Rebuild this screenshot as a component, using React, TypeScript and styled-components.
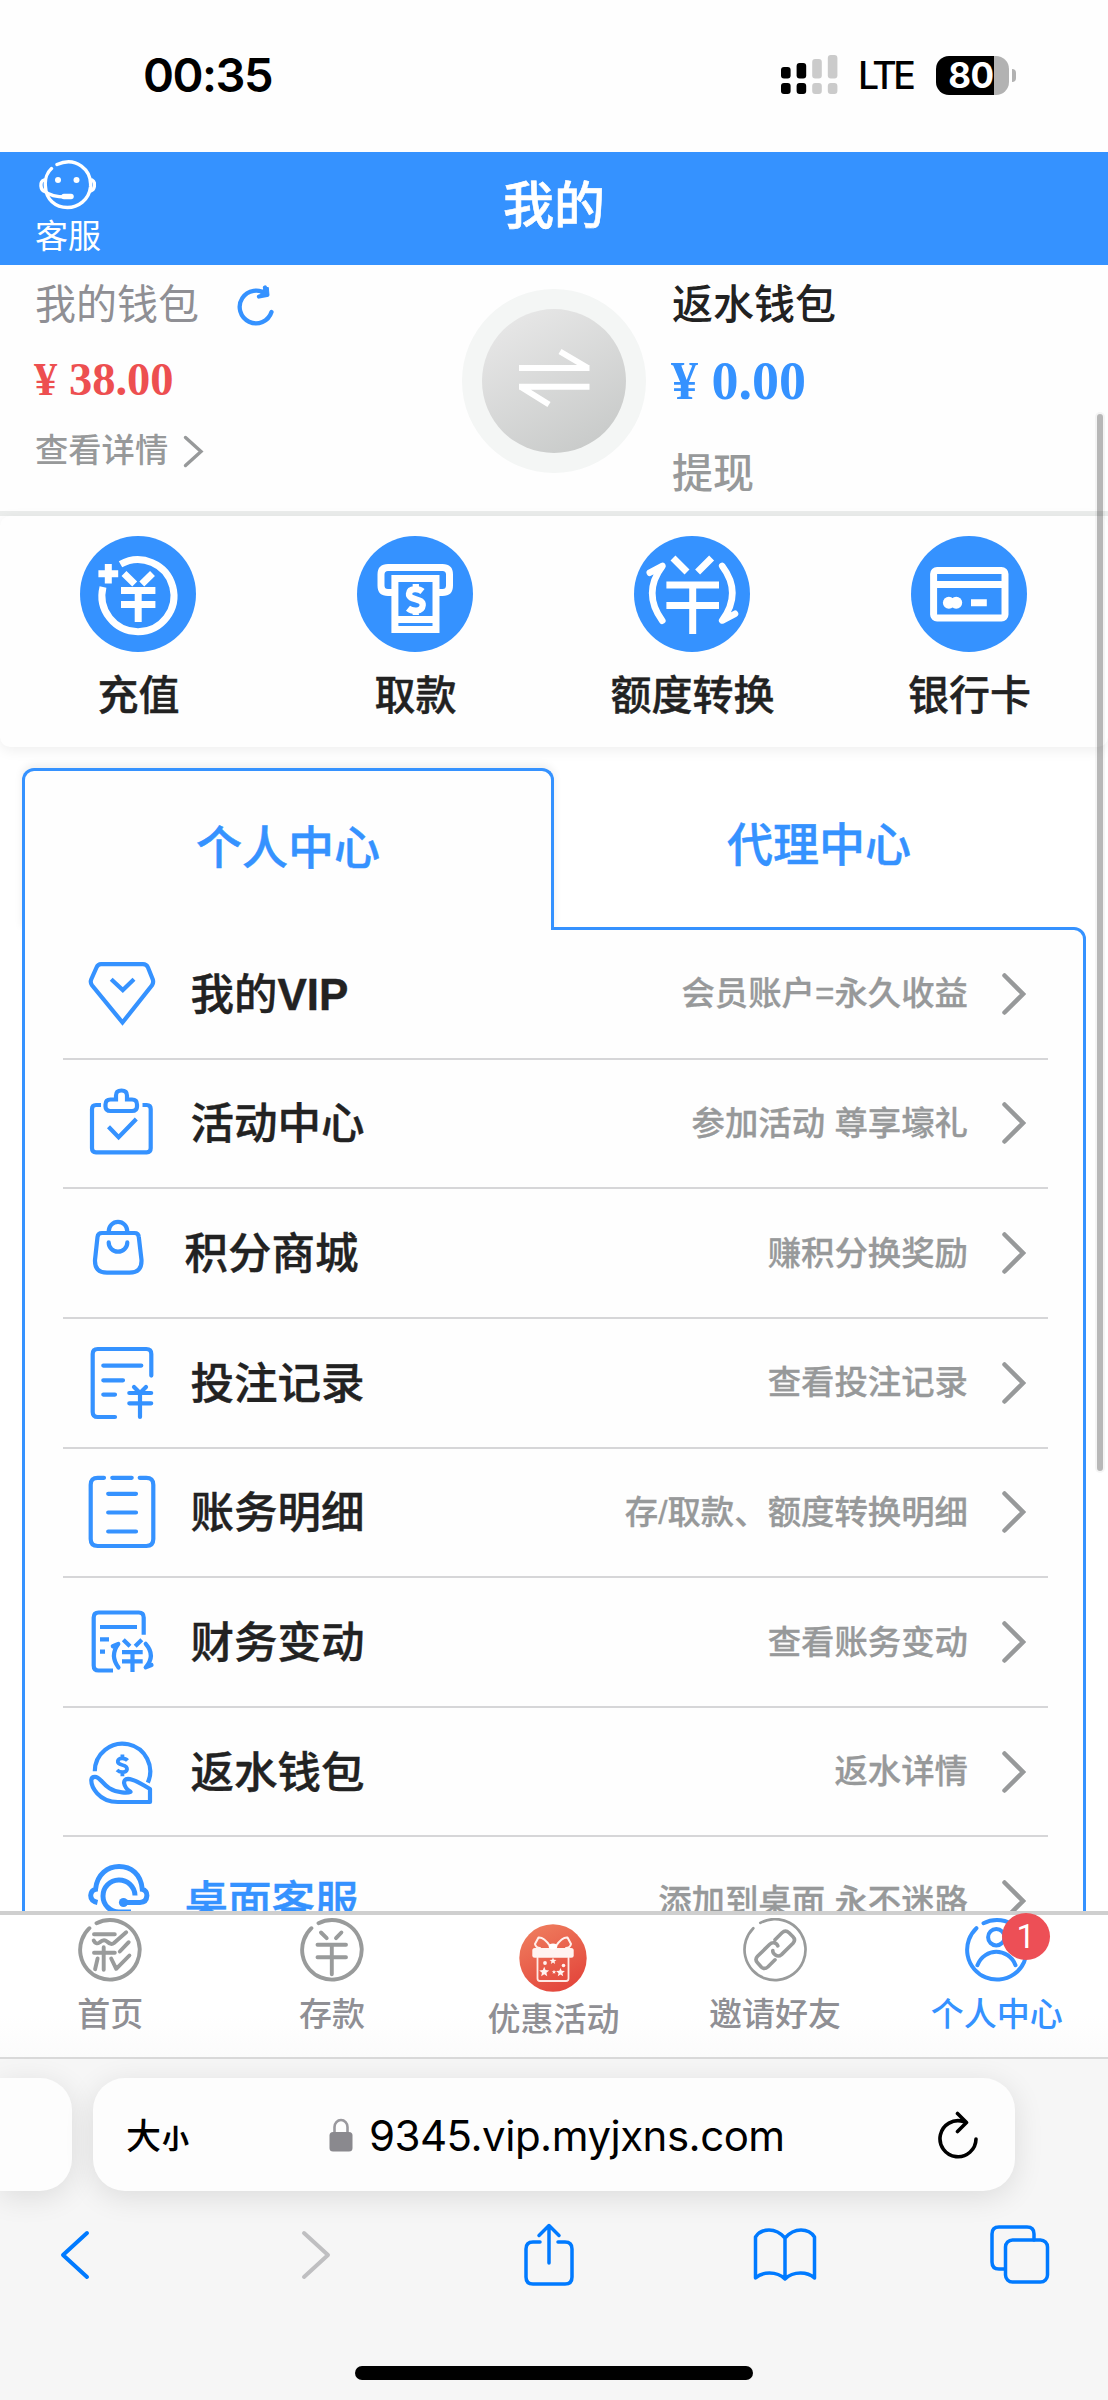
import React from 'react';
import styled, { createGlobalStyle } from 'styled-components';

const BLUE = '#3592ff';
const GREY = '#97999a';
const INK = '#222222';
const SANS = '"Liberation Sans", "Noto Sans CJK SC", sans-serif';
const SYSTEM = 'Inter, "Noto Sans CJK SC", sans-serif';

const GlobalStyle = createGlobalStyle`
  * { box-sizing: border-box; }
  body { margin: 0; background: #fff; }
`;

const Screen = styled.div`
  position: relative;
  display: flex;
  flex-direction: column;
  width: 1108px;
  height: 2400px;
  overflow: hidden;
  background: #fff;
  font-family: ${SANS};
  color: ${INK};
`;

/* ---------- status bar ---------- */

const StatusBar = styled.div`
  flex: none;
  display: flex;
  align-items: center;
  justify-content: space-between;
  height: 152px;
  padding: 0 92px 2px 143px;
  background: #fefefe;
  font-family: ${SYSTEM};
  color: #000;
`;

const Clock = styled.span`
  font-size: 47px;
  line-height: 56px;
  font-weight: 600;
  letter-spacing: -1.5px;
`;

const StatusRight = styled.div`
  display: flex;
  align-items: center;
`;

const Carrier = styled.span`
  width: 60px;
  margin: 2px 18px 0 20px;
  font-size: 37.5px;
  line-height: 44px;
  font-weight: 500;
  letter-spacing: -3.5px;
`;

const Battery = styled.div`
  display: flex;
  align-items: center;
  justify-content: center;
  width: 73px;
  height: 39px;
  padding-right: 3px;
  border-radius: 13px;
  background: linear-gradient(90deg, #000 58px, #b2b2b2 58px);
  color: #fff;
  font-size: 35px;
  line-height: 39px;
  font-weight: 700;
  letter-spacing: -0.5px;
`;

const BatteryNub = styled.div`
  width: 4px;
  height: 13px;
  margin-left: 3px;
  border-radius: 0 4px 4px 0;
  background: #b2b2b2;
`;

/* ---------- page header ---------- */

const Header = styled.header`
  flex: none;
  display: grid;
  grid-template-columns: 1fr auto 1fr;
  height: 113px;
  padding: 0 35px;
  background: ${BLUE};
  color: #fff;
`;

const Support = styled.div`
  display: flex;
  flex-direction: column;
  width: 68px;
  padding-top: 8px;
  font-size: 33px;
  line-height: 40px;
  svg { margin: 0 0 7px 3px; }
`;

const Title = styled.h1`
  margin: 0;
  font-size: 51px;
  line-height: 110px;
  font-weight: 500;
  -webkit-text-stroke: 0.6px currentColor;
`;

/* ---------- scrolling page ---------- */

const Page = styled.main`
  flex: none;
  height: 1646px;
  overflow: hidden;
`;

const Wallets = styled.section`
  display: flex;
  height: 251px;
  border-bottom: 5px solid #ebedec;
  background: #fefefe;
`;

const Wallet = styled.div<{ $left?: boolean }>`
  display: flex;
  flex-direction: column;
  width: ${(p) => (p.$left ? 462 : 430)}px;
  padding: 19px 0 0 ${(p) => (p.$left ? 35 : 26)}px;
`;

const WalletName = styled.div<{ $strong?: boolean }>`
  display: flex;
  align-items: center;
  gap: 38px;
  height: 42px;
  font-size: 41px;
  line-height: 42px;
  font-weight: ${(p) => (p.$strong ? 500 : 400)};
  color: ${(p) => (p.$strong ? INK : '#8f8f94')};
  svg { margin-top: 2px; }
`;

const Amount = styled.div<{ $color: string; $size: number }>`
  height: 56px;
  margin: 26px 0 0 -1px;
  font-family: "Liberation Serif", serif;
  font-weight: 700;
  font-size: ${(p) => p.$size}px;
  line-height: ${(p) => (p.$size > 50 ? 58 : 55)}px;
  color: ${(p) => p.$color};
`;

const WalletLink = styled.div<{ $big?: boolean }>`
  display: flex;
  align-items: center;
  gap: 15px;
  height: 42px;
  margin-top: ${(p) => (p.$big ? 45 : 22)}px;
  font-size: ${(p) => (p.$big ? 41 : 33.3)}px;
  line-height: 42px;
  font-weight: 500;
  color: ${GREY};
`;

const Transfer = styled.div`
  flex: none;
  display: flex;
  align-items: center;
  justify-content: center;
  width: 184px;
  height: 184px;
  margin-top: 23.5px;
  border-radius: 50%;
  background: #f4f6f5;
`;

const TransferDisc = styled.div`
  display: flex;
  align-items: center;
  justify-content: center;
  width: 144px;
  height: 144px;
  border-radius: 50%;
  background: linear-gradient(150deg, #e6e6e6 12%, #c9cbca 88%);
`;

const QuickActions = styled.nav`
  display: grid;
  grid-template-columns: repeat(4, 1fr);
  height: 231px;
  border-radius: 10px;
  background: #fefefe;
  box-shadow: 0 3px 14px rgba(0, 0, 0, 0.07);
`;

const QuickAction = styled.div`
  display: flex;
  flex-direction: column;
  align-items: center;
  padding-top: 20px;
  font-size: 41px;
  line-height: 48px;
  font-weight: 500;
  -webkit-text-stroke: 0.4px currentColor;
  svg { margin: 0 1px 20px 0; border-radius: 50%; background: ${BLUE}; }
`;

const Center = styled.section`
  margin: 21px 22px 0;
`;

const Tabs = styled.div`
  display: flex;
  height: 159px;
`;

const Tab = styled.div<{ $active?: boolean }>`
  width: ${(p) => (p.$active ? 532 : 530)}px;
  height: ${(p) => (p.$active ? 162 : 150)}px;
  border: 3px solid ${(p) => (p.$active ? BLUE : 'transparent')};
  border-bottom: 0;
  border-radius: 12px 12px 0 0;
  background: ${(p) => (p.$active ? '#fefefe' : 'transparent')};
  position: relative;
  z-index: ${(p) => (p.$active ? 1 : 0)};
  box-shadow: ${(p) => (p.$active ? '0 -3px 8px rgba(0,0,0,.07)' : 'none')};
  clip-path: inset(-12px -12px 0 -12px);
  text-align: center;
  font-size: 46px;
  line-height: ${(p) => (p.$active ? 155 : 149)}px;
  font-weight: 500;
  -webkit-text-stroke: 0.5px currentColor;
  color: ${BLUE};
`;

const Panel = styled.div`
  height: 1060px;
  padding: 0 35px 0 38px;
  border: 3px solid ${BLUE};
  border-radius: 0 12px 0 0;
  background: #fefefe;
`;

const MenuRow = styled.div`
  display: flex;
  align-items: center;
  height: 129.65px;
  padding: 0 22px 0 23px;
  border-bottom: 2px solid #d6d6d8;
`;

const MenuIcon = styled.svg<{ $tight?: boolean }>`
  flex: none;
  width: 72px;
  height: 72px;
  margin-right: ${(p) => (p.$tight ? 26.5 : 32.5)}px;
  overflow: visible;
  fill: none;
  stroke: ${BLUE};
  stroke-width: 4.2;
`;

const MenuLabel = styled.span<{ $accent?: boolean }>`
  flex: 1;
  padding-top: 2px;
  font-size: 43.5px;
  line-height: 60px;
  font-weight: 500;
  -webkit-text-stroke: 0.4px currentColor;
  color: ${(p) => (p.$accent ? BLUE : INK)};
  b { font-weight: 700; font-size: 44px; }
`;

const MenuHint = styled.span`
  margin-right: 34px;
  padding-top: 1px;
  font-size: 33.4px;
  line-height: 50px;
  font-weight: 500;
  -webkit-text-stroke: 0.3px currentColor;
  color: ${GREY};
`;

const ScrollThumb = styled.div`
  position: absolute;
  z-index: 2;
  top: 414px;
  left: 1097px;
  width: 6px;
  height: 1057px;
  border-radius: 3px;
  background: rgba(0, 0, 0, 0.28);
  box-shadow: 0 0 0 2px rgba(0, 0, 0, 0.04);
`;

/* ---------- site tab bar ---------- */

const TabBar = styled.nav`
  flex: none;
  display: grid;
  grid-template-columns: repeat(5, 1fr);
  height: 148px;
  border-top: 4px solid #cfcfcf;
  border-bottom: 2px solid #d9d9d9;
  background: linear-gradient(#fff 70%, #fbfbfb);
`;

const TabItem = styled.div<{ $active?: boolean; $drop?: boolean }>`
  display: flex;
  flex-direction: column;
  align-items: center;
  padding-top: ${(p) => (p.$drop ? 9 : 2.5)}px;
  font-size: 33px;
  line-height: 40px;
  font-weight: 500;
  color: ${(p) => (p.$active ? BLUE : '#8f8f94')};
  span { margin-top: ${(p) => (p.$drop ? 8 : 13)}px; margin-right: 1px; }
`;

const TabIcon = styled.div`
  position: relative;
  display: flex;
  margin-right: 1px;
  svg { fill: none; stroke-linecap: round; stroke-linejoin: round; }
`;

const Badge = styled.div`
  position: absolute;
  top: -5px;
  left: 37px;
  width: 48px;
  height: 47px;
  border-radius: 50%;
  background: #ed4f56;
  color: #fff;
  font-family: Roboto, sans-serif;
  font-weight: 400;
  font-size: 33px;
  line-height: 47px;
  text-align: center;
`;

/* ---------- browser chrome ---------- */

const Browser = styled.footer`
  flex: none;
  display: flex;
  flex-direction: column;
  align-items: center;
  height: 341px;
  background: #f6f6f6;
  font-family: ${SYSTEM};
  color: #000;
`;

const AddressRow = styled.div`
  display: flex;
  width: 100%;
  gap: 21px;
  padding-top: 19px;
`;

const PreviousTab = styled.div`
  width: 72px;
  height: 113px;
  border-radius: 0 32px 32px 0;
  background: #fdfdfd;
  box-shadow: 0 6px 30px rgba(0, 0, 0, 0.11);
`;

const Address = styled.div`
  display: flex;
  align-items: center;
  width: 922px;
  height: 113px;
  padding: 0 37px 0 33px;
  border-radius: 32px;
  background: #fdfdfd;
  box-shadow: 0 6px 30px rgba(0, 0, 0, 0.11);
`;

const TextSize = styled.span`
  width: 203px;
  padding-top: 2px;
  font-family: "Noto Sans CJK SC", sans-serif;
  font-size: 35px;
  line-height: 50px;
  font-weight: 500;
  small { margin-left: 1px; font-size: 27px; font-weight: 700; }
`;

const Url = styled.span`
  flex: 1;
  margin-left: 16px;
  padding-top: 2px;
  font-size: 42px;
  line-height: 54px;
  letter-spacing: -0.5px;
  white-space: nowrap;
`;

const Toolbar = styled.div`
  display: flex;
  align-items: center;
  justify-content: space-between;
  width: 100%;
  height: 66px;
  margin-top: 31px;
  padding: 0 56px 0 46px;
  svg { fill: none; stroke: #007aff; stroke-width: 3.5; stroke-linecap: round; stroke-linejoin: round; }
`;

const ToolButton = styled.div<{ $shift?: number; $disabled?: boolean }>`
  display: flex;
  justify-content: center;
  width: 64px;
  ${(p) => p.$shift && `padding-${p.$shift < 0 ? 'right' : 'left'}: ${Math.abs(p.$shift)}px;`}
  && svg { ${(p) => p.$disabled && 'stroke: #bfbfc1;'} }
`;

const HomeIndicator = styled.div`
  width: 398px;
  height: 14px;
  margin-top: 78px;
  border-radius: 7px;
  background: #000;
`;

/* ---------- drawings ---------- */

const Chevron = ({ w = 24, h = 42, sw = 4.5 }: { w?: number; h?: number; sw?: number }) => (
  <svg width={w} height={h} viewBox={`0 0 ${w} ${h}`} fill="none" stroke={GREY} strokeWidth={sw} strokeLinecap="round">
    <path d={`M2.5 2.5 L${w - 3} ${h / 2} L2.5 ${h - 2.5}`} />
  </svg>
);

const Signal = () => (
  <svg width="57" height="40" viewBox="0 0 57 40">
    {[12, 8, 4, 0].map((y, i) => (
      <g key={y} fill={i < 2 ? '#000' : '#cbcbcb'}>
        <rect x={i * 15.6} y={y} width="9.6" height={23.5 - y} rx="3" />
        <rect x={i * 15.6} y="28" width="9.6" height="11" rx="3" />
      </g>
    ))}
  </svg>
);

const Face = () => (
  <svg width="58" height="50" viewBox="0 0 58 50" fill="none" stroke="#fff" strokeWidth="3.4" strokeLinecap="round">
    <path d="M19 4.5 C38 -4 54 10 52.5 27 C51 40 40 47.5 29.5 47.5 C17 47.5 8 39 7.5 27 C6.5 19 9.5 12 13.5 8.5" />
    <path d="M6 20 C1.5 21.5 2 30 7 31.5 C12 36 19 37 28 37" />
    <path d="M54 20 C58 22 57 30 52.5 31" />
    <path d="M26 36.5 h7" strokeWidth="5.5" />
    <ellipse cx="20" cy="20" rx="3" ry="3" fill="#fff" stroke="none" />
    <ellipse cx="38.5" cy="20" rx="3" ry="3" fill="#fff" stroke="none" />
  </svg>
);

const Refresh = () => (
  <svg width="38" height="42" viewBox="0 0 38 42" fill="none" stroke={BLUE} strokeWidth="4.3" strokeLinecap="round" strokeLinejoin="round">
    <path d="M34.5 27 A16.3 16.3 0 1 1 29.5 9.5 M28 2.5 L30 10 L22 11.5" />
    <path d="M28 2.5 L31.3 2.5 L32 10.5 L22 12 Z" fill={BLUE} strokeWidth="1" />
  </svg>
);

const yuan = (
  <path d="M44 37.5 L54.7 48 M72.5 37.5 L61.8 48 M41 54.5 H75.4 M41 68.5 H75.4 M58.2 54.5 V86" />
);

const TopUpIcon = () => (
  <svg width="116" height="116" fill="none" stroke="#fff" strokeWidth="7">
    <path d="M40.5 28.2 A36 36 0 1 1 23 51" />
    <path d="M28.3 28 V47.5 M18.4 37.7 H38.2" />
    {yuan}
  </svg>
);

const WithdrawIcon = () => (
  <svg width="116" height="116" fill="none" stroke="#fff" strokeWidth="7">
    <path d="M36 56.5 H31 Q24 56.5 24 49.5 V38.5 Q24 31.5 31 31.5 H85.5 Q92.5 31.5 92.5 38.5 V49.5 Q92.5 56.5 85.5 56.5 H81" />
    <path d="M37.9 42.5 H79 V93.5 H37.9 Z M37.9 83.5 H79" />
    <path d="M65.5 55.5 C62 52.5 52.5 51.5 52 57.8 C51.5 65 66.5 61.5 65.7 69.3 C65 76.5 55 75.5 51 72.2 M58.8 48 V53 M58.8 74 V79" strokeWidth="6.3" />
  </svg>
);

const ConvertIcon = () => (
  <svg width="116" height="116" fill="none" stroke="#fff" strokeWidth="7">
    <path d="M39 22 L53 36 M77.6 22 L63.6 36 M32.4 49 H85 M32.4 69.5 H85 M58.7 49 V98" />
    <g strokeLinecap="round" strokeLinejoin="round" strokeWidth="6.6">
      <path d="M15.8 36.7 L28.5 30 Q8 57 28.3 84.7" />
      <path d="M88.2 30 Q108.5 57 88.2 84.5 L101 77.8" />
    </g>
  </svg>
);

const CardIcon = () => (
  <svg width="116" height="116" fill="none" stroke="#fff" strokeWidth="7">
    <rect x="22.6" y="34.5" width="71.4" height="47.5" rx="3.5" />
    <path d="M22 48.5 H94 M60 66.8 H75.8" />
    <g fill="#fff" stroke="none"><circle cx="37.9" cy="66.8" r="6" /><circle cx="45.2" cy="66.8" r="6" /></g>
  </svg>
);

const ring = 'M18.5 5.2 A29.8 29.8 0 1 1 11.4 10.2';

const HomeIcon = () => (
  <svg width="64" height="64" stroke="#999b9b" strokeWidth="3.9">
    <path d={ring} />
    <path d="M16 16.2 H36.8 M15.7 22.5 Q18 27 21.5 24.5 Q25.7 20.5 29 23.5 Q33 27.5 36 25 L48.2 14.2 M16 34.8 H36.8 M25.7 29.2 V51.8 M19.6 40.5 L17.1 51.2 M33.2 40.5 L38.2 50.8 L51.4 37.5 M41.8 33.5 L50.7 24.2" />
  </svg>
);

const DepositIcon = () => (
  <svg width="64" height="64" stroke="#999b9b" strokeWidth="3.9">
    <path d={ring} />
    <path d="M21 14.5 L26.7 20.2 M41.4 14.5 L36 20.2 M17.5 26.8 H46 M17.5 39.2 H46 M31.8 26.8 V56.2" />
  </svg>
);

const InviteIcon = () => (
  <svg width="64" height="64" stroke="#999b9b" strokeWidth="2.7">
    <path d="M17.3 4.9 A30.5 30.5 0 1 1 10.3 10.2" />
    <path strokeWidth="3.6" d="M32 21.8 L39 14.8 Q42.5 11.5 46 14.8 L50 18.8 Q53 21.8 50 25.2 L38.5 36.6 Q35.5 39.2 32.5 37 Q29.5 35 29.8 32.5 M34.8 27.8 Q34 25.5 31 24.8 Q28.5 24.5 26.5 26.5 L14.5 38.3 Q11.5 41.5 14.5 44.8 L18.5 49.2 Q21.5 52 25 48.7 L32 41.8" />
  </svg>
);

const ProfileIcon = () => (
  <svg width="64" height="64" stroke={BLUE} strokeWidth="4">
    <path d={ring} />
    <circle cx="31.3" cy="19.2" r="8.2" />
    <path d="M12.4 47.2 C16 38 24 33.8 31.3 33.8 S47 38 50.5 47.2" />
  </svg>
);

const star = (x: number, y: number, r: number) =>
  Array.from({ length: 10 }, (_, i) => {
    const q = i % 2 ? r * 0.45 : r;
    const a = (Math.PI * i) / 5 - Math.PI / 2;
    return `${x + q * Math.cos(a)},${y + q * Math.sin(a)}`;
  }).join(' ');

const GiftIcon = () => (
  <svg width="68" height="68">
    <defs>
      <linearGradient id="gift" x1="0.2" y1="0" x2="0.7" y2="1">
        <stop offset="0" stopColor="#ef7d5e" />
        <stop offset="1" stopColor="#e3453b" />
      </linearGradient>
    </defs>
    <circle cx="34" cy="34" r="33.7" fill="url(#gift)" />
    <path d="M18.5 34 V54.5 Q18.5 57 21 57 H47 Q49.5 57 49.5 54.5 V34" stroke="#ffe9e4" strokeWidth="1.8" />
    <path d="M31 22 Q25 13 19.5 13.5 L16 20 Q17 24 21 24 M37 22 Q43 13 48.5 13.5 L52 20 Q51 24 47 24" stroke="#fff0ec" strokeWidth="2" />
    <rect x="13.3" y="24" width="41.4" height="9.8" rx="2.5" fill="#fff3f0" />
    <ellipse cx="34" cy="22.5" rx="4.3" ry="3" fill="#fff" />
    <g fill="#fff3f0">
      <polygon points={star(25.2, 48, 5.2)} />
      <polygon points={star(41.5, 48.5, 4.6)} />
      <polygon points={star(34, 37, 3.6)} />
      <polygon points={star(35, 48, 2.3)} />
      <circle cx="26" cy="39" r="1.9" /><circle cx="44.5" cy="41.5" r="1.8" />
    </g>
  </svg>
);

type Item = { label: React.ReactNode; hint: string; tight?: boolean; accent?: boolean; icon: React.ReactNode };

const items: Item[] = [
  {
    label: <>我的<b>VIP</b></>,
    hint: '会员账户=永久收益',
    icon: (
      <path d="M15 6.2 H57 Q60.5 6.2 62 9.5 L66.8 21.5 Q67.8 24.5 66 27.3 L36.5 64.5 L6 27.3 Q4 24.5 5.2 21.5 L10.5 9.5 Q12 6.2 15 6.2 Z M25.2 21.2 L36.8 32 L48 21.2" />
    ),
  },
  {
    label: '活动中心',
    hint: '参加活动 尊享壕礼',
    icon: (
      <path d="M15 18 H10 q-4 0 -4 4 V61.3 q0 4 4 4 H60.7 q4 0 4-4 V22 q0-4-4-4 H56.5 M24.5 12.5 H30 V8.5 q0-5 5.5-5 t5.5 5 V12.5 H46 q5 0 5 5 v2 q0 4.5-5 4.5 H24.5 q-5 0-5-4.5 v-2 q0-5 5-5z M22.5 39.8 L32.6 50.3 L50.3 32" />
    ),
  },
  {
    label: '积分商城',
    hint: '赚积分换奖励',
    tight: true,
    icon: (
      <path strokeLinecap="round" d="M16 16 H48.5 q4 0 4.3 4 L55.5 43 q.5 12.7 -12 12.7 H21 Q8.5 55.7 9 43 L11.5 20 q.4-4 4.5-4z M22.7 14.5 a9.3 9.7 0 0 1 18.6 0 M22.7 25.4 a9.3 9.3 0 0 0 18.6 0" />
    ),
  },
  {
    label: '投注记录',
    hint: '查看投注记录',
    icon: (
      <path strokeLinecap="round" d="M65.3 28.6 V7 q0-5-5-5 H11.7 q-5 0-5 5 V65 q0 5 5 5 H29 M17.3 18.6 H55.3 M17.3 33.3 H37 M17.3 47.6 H29 M48 40 L54 46 L60 40 M43.3 46 H65.2 M43.3 56.3 H65.2 M54 46 V70" />
    ),
  },
  {
    label: '账务明细',
    hint: '存/取款、额度转换明细',
    icon: (
      <path strokeLinecap="round" d="M18 1.8 H11.7 q-7 0-7 7 V63 q0 7 7 7 H60.3 q7 0 7-7 V8.8 q0-7-7-7 H53.7 M26.3 1.8 H45.7 M22.2 17.8 H50 M22.2 36.5 H50 M22.2 55.5 H50" />
    ),
  },
  {
    label: '财务变动',
    hint: '查看账务变动',
    icon: (
      <>
        <path d="M57.7 28.7 V11.5 q0-5-5-5 H12.7 q-5 0-5 5 V59.5 q0 5 5 5 H27 M14 21 H51 M14 33.3 H23 M14 45.7 H19 M37.3 33.7 L44 40.3 M55.8 33.7 L49.2 40.3 M36 46.2 H56.7 M36 55.3 H56.7 M46.5 46 V66" />
        <path strokeLinecap="round" strokeLinejoin="round" d="M26.8 40.3 L32.3 38 Q23.5 49.5 32.5 61.5 M59.7 37.8 Q70 49.5 59.7 61.3 L65.5 59" />
      </>
    ),
  },
  {
    label: '返水钱包',
    hint: '返水详情',
    icon: (
      <>
        <path d="M8.8 35.3 A27.7 27.7 0 1 1 61.8 46.6" />
        <path strokeLinejoin="round" d="M9 40.8 C16 40.8 18 55 36 56.3 Q42 57 44.5 55.8 C37 51 36 42.8 42 42.8 C49 43 55 48 64 53 V66 H32 C12 66 5.3 50 5.3 44.5 Q5.3 40.8 9 40.8Z" />
        <path d="M41.5 24.5 C39 21.5 32.5 21.5 31.8 25 C31 30.5 42 27.5 41 33.5 C40 37.5 33.5 36.5 31 34 M36.4 18.6 V23 M36.4 36 V40.3" strokeWidth="3.8" />
      </>
    ),
  },
  {
    label: '桌面客服',
    hint: '添加到桌面 永不迷路',
    tight: true,
    accent: true,
    icon: (
      <>
        <path strokeWidth="5" d="M11.5 37.5 Q4.7 36 4.7 30.5 Q5 25.5 9.5 24.4 C11 9 22 1.4 33 1.4 C45 1.4 55 9 56.3 24.4 Q60.9 25.5 60.9 30.5 Q60.5 37.3 54 37.4 H38" />
        <path strokeWidth="5" d="M49 30.5 A16 16 0 1 0 33 47 H45" />
        <circle cx="37.5" cy="37.5" r="4.6" fill={BLUE} stroke="none" />
      </>
    ),
  },
];

export default function App() {
  return (
    <Screen>
      <GlobalStyle />
      <StatusBar>
        <Clock>00:35</Clock>
        <StatusRight>
          <Signal />
          <Carrier>LTE</Carrier>
          <Battery>80</Battery>
          <BatteryNub />
        </StatusRight>
      </StatusBar>

      <Header>
        <Support><Face />客服</Support>
        <Title>我的</Title>
      </Header>

      <Page>
        <Wallets>
          <Wallet $left>
            <WalletName>我的钱包<Refresh /></WalletName>
            <Amount $color="#ed4f50" $size={46.5}>¥ 38.00</Amount>
            <WalletLink>查看详情<Chevron w={21} h={33} sw={3.4} /></WalletLink>
          </Wallet>
          <Transfer>
            <TransferDisc>
              <svg width="72" height="66" fill="none" stroke="#fff" strokeWidth="6">
                <path d="M1 20 H71.5 M70 20 L42 3.5" />
                <path d="M1 38.7 H71.5 M2.5 38.7 L31 56.5" />
              </svg>
            </TransferDisc>
          </Transfer>
          <Wallet>
            <WalletName $strong>返水钱包</WalletName>
            <Amount $color={BLUE} $size={54}>¥ 0.00</Amount>
            <WalletLink $big>提现</WalletLink>
          </Wallet>
        </Wallets>

        <QuickActions>
          <QuickAction><TopUpIcon />充值</QuickAction>
          <QuickAction><WithdrawIcon />取款</QuickAction>
          <QuickAction><ConvertIcon />额度转换</QuickAction>
          <QuickAction><CardIcon />银行卡</QuickAction>
        </QuickActions>

        <Center>
          <Tabs>
            <Tab $active>个人中心</Tab>
            <Tab>代理中心</Tab>
          </Tabs>
          <Panel>
            {items.map((item) => (
              <MenuRow key={item.hint}>
                <MenuIcon viewBox="0 0 72 72" $tight={item.tight}>{item.icon}</MenuIcon>
                <MenuLabel $accent={item.accent}>{item.label}</MenuLabel>
                <MenuHint>{item.hint}</MenuHint>
                <Chevron />
              </MenuRow>
            ))}
          </Panel>
        </Center>
      </Page>
      <ScrollThumb />

      <TabBar>
        <TabItem><TabIcon><HomeIcon /></TabIcon><span>首页</span></TabItem>
        <TabItem><TabIcon><DepositIcon /></TabIcon><span>存款</span></TabItem>
        <TabItem $drop><TabIcon><GiftIcon /></TabIcon><span>优惠活动</span></TabItem>
        <TabItem><TabIcon><InviteIcon /></TabIcon><span>邀请好友</span></TabItem>
        <TabItem $active><TabIcon><ProfileIcon /><Badge>1</Badge></TabIcon><span>个人中心</span></TabItem>
      </TabBar>

      <Browser>
        <AddressRow>
          <PreviousTab />
          <Address>
            <TextSize>大<small>小</small></TextSize>
            <svg width="24" height="34" fill="none">
              <path d="M5.5 16 V9 a6.5 7 0 0 1 13 0 V16" stroke="#9a999e" strokeWidth="2.6" />
              <rect x="0.5" y="14" width="23" height="19.5" rx="3.5" fill="#8a898e" />
            </svg>
            <Url>9345.vip.myjxns.com</Url>
            <svg width="40" height="48" fill="none" stroke="#000" strokeWidth="3.6" strokeLinecap="round" strokeLinejoin="round">
              <path d="M38 28 A18 18 0 1 1 25.5 10.6 M19.5 2.5 L28.5 11.5 L19.5 20.5" />
            </svg>
          </Address>
        </AddressRow>
        <Toolbar>
          <ToolButton $shift={-7}>
            <svg width="32" height="50"><path d="M28 3 L4 25 L28 47" strokeWidth="4" /></svg>
          </ToolButton>
          <ToolButton $shift={4} $disabled>
            <svg width="32" height="50"><path d="M4 3 L28 25 L4 47" strokeWidth="4" /></svg>
          </ToolButton>
          <ToolButton>
            <svg width="50" height="64"><path d="M16 19 H9 Q2 19 2 26 V54 Q2 61 9 61 H41 Q48 61 48 54 V26 Q48 19 41 19 H34 M25 40 V3 M15 12.5 L25 2.5 L35 12.5" /></svg>
          </ToolButton>
          <ToolButton>
            <svg width="64" height="54"><path d="M32 10 Q25 2 16 2 Q7 2 2.5 9 V50 Q8 45 16.5 45 Q26 45 32 51 Q38 45 47.5 45 Q56 45 61.5 50 V9 Q57 2 48 2 Q39 2 32 10 V51" /></svg>
          </ToolButton>
          <ToolButton>
            <svg width="60" height="60"><path d="M15 44 H9 Q2 44 2 37 V9 Q2 2 9 2 H37 Q44 2 44 9 V15" /><rect x="15.5" y="15" width="42" height="42" rx="7" /></svg>
          </ToolButton>
        </Toolbar>
        <HomeIndicator />
      </Browser>
    </Screen>
  );
}
